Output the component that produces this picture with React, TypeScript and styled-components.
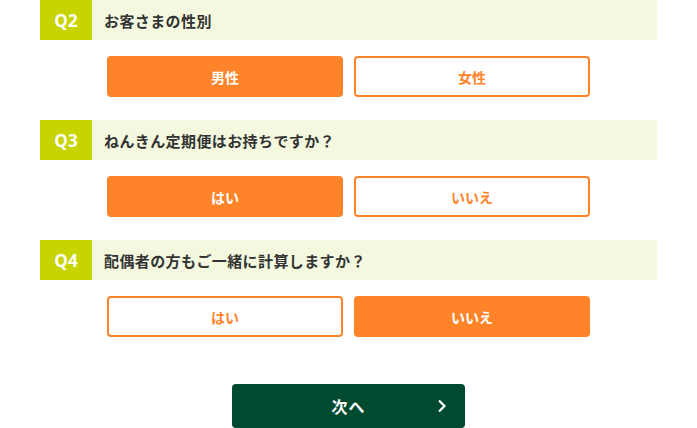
import * as React from 'react'
import styled, { createGlobalStyle } from 'styled-components'

const GlobalStyle = createGlobalStyle`
  html, body {
    margin: 0;
    padding: 0;
    background: #fff;
  }
  body {
    font-family: "Noto Sans CJK JP", "Noto Sans", sans-serif;
    color: #333;
  }
`

const Page = styled.div`
  width: 697px;
  padding: 0 40px;
  box-sizing: border-box;
`

const Question = styled.section`
  margin-bottom: 23px;
`

const Header = styled.div`
  display: flex;
  align-items: stretch;
  height: 40px;
  background: #f3f8df;
`

const Num = styled.div`
  width: 52px;
  display: flex;
  align-items: center;
  justify-content: center;
  background: #c8d400;
  color: #fff;
  font-family: "Open Sans", "Noto Sans", sans-serif;
  font-weight: 700;
  font-size: 17px;
`

const Label = styled.h3`
  margin: 0 0 0 12px;
  display: flex;
  align-items: center;
  font-size: 15px;
  font-weight: 700;
  color: #333;
  letter-spacing: 0.4px;
`

const Choices = styled.div`
  display: flex;
  justify-content: center;
  gap: 11px;
  margin-top: 16px;
`

const Choice = styled.button<{ $on?: boolean }>`
  width: 236px;
  height: 41px;
  box-sizing: border-box;
  border: 2px solid #ff8329;
  border-radius: 4px;
  background: ${p => (p.$on ? '#ff8329' : '#fff')};
  color: ${p => (p.$on ? '#fff' : '#ff8329')};
  font-family: inherit;
  font-size: 14px;
  font-weight: 700;
  cursor: pointer;
`

const Footer = styled.div`
  display: flex;
  justify-content: center;
  padding-top: 24px;
`

const Next = styled.button`
  position: relative;
  width: 233px;
  height: 44px;
  border: none;
  border-radius: 4px;
  background: #004a2f;
  color: #fff;
  font-family: inherit;
  font-size: 16px;
  font-weight: 700;
  letter-spacing: 1px;
  cursor: pointer;

  svg {
    position: absolute;
    right: 18px;
    top: 50%;
    transform: translateY(-50%);
  }
`

const questions = [
  { no: 'Q2', text: 'お客さまの性別', options: ['男性', '女性'], selected: 0 },
  { no: 'Q3', text: 'ねんきん定期便はお持ちですか？', options: ['はい', 'いいえ'], selected: 0 },
  { no: 'Q4', text: '配偶者の方もご一緒に計算しますか？', options: ['はい', 'いいえ'], selected: 1 },
]

export default function App() {
  return (
    <Page>
      <GlobalStyle />
      {questions.map(q => (
        <Question key={q.no}>
          <Header>
            <Num>{q.no}</Num>
            <Label>{q.text}</Label>
          </Header>
          <Choices>
            {q.options.map((o, i) => (
              <Choice key={o} $on={i === q.selected}>
                {o}
              </Choice>
            ))}
          </Choices>
        </Question>
      ))}
      <Footer>
        <Next>
          次へ
          <svg width="10" height="14" viewBox="0 0 10 14">
            <path d="M2 1.5 L7.5 7 L2 12.5" fill="none" stroke="#fff" strokeWidth="2.2" />
          </svg>
        </Next>
      </Footer>
    </Page>
  )
}
